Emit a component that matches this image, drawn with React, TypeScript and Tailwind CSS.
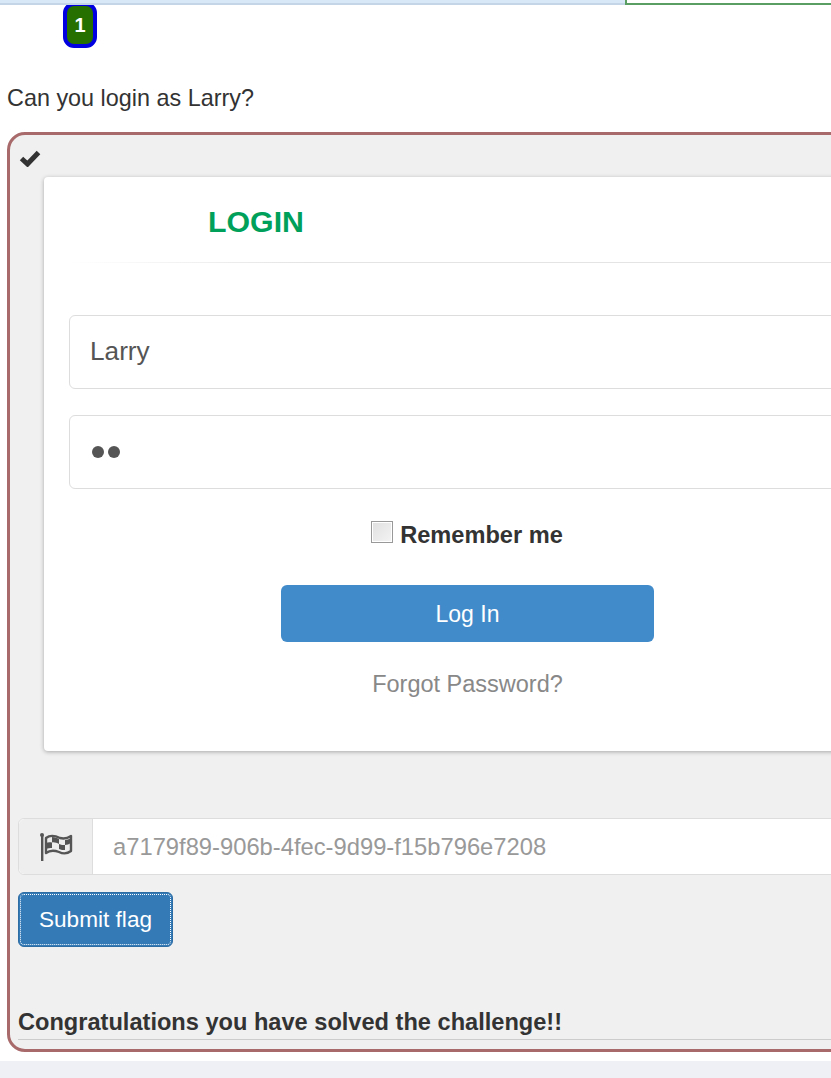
function CheckIcon() {
  return (
    <svg viewBox="0 0 22 17" className="h-[17px] w-[22px]" fill="none" stroke="#333" strokeWidth="5">
      <path d="M2.5 8.5 L8.5 14 L19.5 2.5" />
    </svg>
  );
}

// fa-flag-checkered, the older outlined version
function FlagIcon() {
  return (
    <svg viewBox="0 0 34 30" className="h-[30px] w-[34px]">
      <circle cx="3" cy="3" r="2" fill="#555" />
      <rect x="2" y="3" width="2.4" height="26" fill="#555" />
      <path
        d="M7 6 C12 2 17 4 21 6 C25 7 29 6 32 4 L32 19 C28 22 24 22 20 20 C15 18 11 18 7 21 Z"
        fill="#eee"
        stroke="#555"
        strokeWidth="2.4"
        strokeLinejoin="round"
      />
      <path d="M13 5 C16 5 18 6 20 7 L20 12 C18 11 15 10 13 10.5 Z M26 8 C28 8 30 7 32 6 L32 11 C30 12 28 13 26 13 Z M7 11 C9 10 11 10 13 10.5 L13 16 C11 16 9 16 7 17 Z M20 12 C22 13 24 13 26 13 L26 18 C24 18 22 18 20 17 Z" fill="#555" />
    </svg>
  );
}

export default function App() {
  return (
    <div className="flex h-[1078px] w-[831px] flex-col overflow-hidden bg-white font-['Liberation_Sans',Arial,sans-serif] text-[#333]">
      {/* top strip */}
      <div className="relative z-10 flex h-[5px] shrink-0">
        <div className="w-[625px] border-b-2 border-[#c5d5e8] bg-[#d9e8f7]" />
        <div className="flex-1 border-b-[2px] border-l-[2px] border-[#5a9e63] bg-white" />
      </div>

      <div className="-mt-[3px] pl-[63px]">
        <div className="flex h-[46px] w-[34px] items-center justify-center rounded-[11px] border-[4px] border-[#0000e0] bg-[#267000] text-[20px] font-bold text-white">
          1
        </div>
      </div>

      <p className="mt-[36px] pl-[7px] text-[23.4px] leading-[28px]">Can you login as Larry?</p>

      <div className="mt-[20px] ml-[7px] h-[920px] w-[900px] shrink-0 rounded-[18px] border-[3px] border-[#a86a6a] bg-[#f0f0f0] pl-[8px]">
        <div className="mt-[15px] ml-[1px] h-[18px]">
          <CheckIcon />
        </div>

        <div className="mt-[9px] ml-[26px] h-[574px] w-[847px] rounded-[4px] bg-white px-[25px] shadow-[0_1px_4px_rgba(0,0,0,0.3)]">
          <h1 className="pt-[26px] pl-[139px] text-[30.3px] leading-[38px] font-bold text-[#00a05a]">LOGIN</h1>
          <div className="mt-[21px] h-px bg-gradient-to-r from-white via-[#e4e4e4] via-30% to-[#e4e4e4]" />

          <div className="mt-[52px] flex h-[74px] items-center rounded-[6px] border border-[#ddd] bg-white pl-[20px] text-[26.2px] text-[#555]">
            Larry
          </div>
          <div className="mt-[26px] flex h-[74px] items-center gap-[4px] rounded-[6px] border border-[#ddd] bg-white pb-[1px] pl-[22px]">
            <span className="h-[12px] w-[12px] rounded-full bg-[#555]" />
            <span className="h-[12px] w-[12px] rounded-full bg-[#555]" />
          </div>

          <div className="mt-[32px] -ml-[1px] flex items-center justify-center gap-[7px]">
            <span className="h-[22px] w-[22px] -translate-y-[3px] border border-[#999] bg-gradient-to-br from-[#e0e0e0] to-[#f4f4f4] shadow-[inset_0_0_0_1px_#fff]" />
            <span className="text-[23.6px] leading-[28px] font-bold">Remember me</span>
          </div>

          <div className="mx-auto mt-[36px] flex h-[57px] w-[373px] items-center justify-center rounded-[6px] bg-[#428bca] pt-[1px] text-[23px] text-white">
            Log In
          </div>
          <p className="mt-[28px] text-center text-[23.5px] leading-[28px] text-[#888]">Forgot Password?</p>
        </div>

        <div className="mt-[67px] flex h-[57px] w-[870px] rounded-[6px] border border-[#ddd] bg-white">
          <div className="flex w-[74px] items-center justify-center rounded-l-[6px] border-r border-[#ddd] bg-[#eee]">
            <FlagIcon />
          </div>
          <div className="flex items-center pl-[20px] text-[23.75px] text-[#999]">a7179f89-906b-4fec-9d99-f15b796e7208</div>
        </div>

        <button className="mt-[17px] flex h-[55px] w-[155px] items-center justify-center rounded-[6px] border border-[#2e6da4] bg-[#337ab7] text-[22.6px] text-white outline-1 -outline-offset-3 outline-white outline-dotted">
          Submit flag
        </button>

        <p className="mt-[60px] text-[23.6px] leading-[30px] font-bold">Congratulations you have solved the challenge!!</p>
        <div className="mt-[2px] h-px bg-[#ccc]" />
      </div>

      <div className="mt-[9px] flex-1 bg-[#eef0f6]" />
    </div>
  );
}
